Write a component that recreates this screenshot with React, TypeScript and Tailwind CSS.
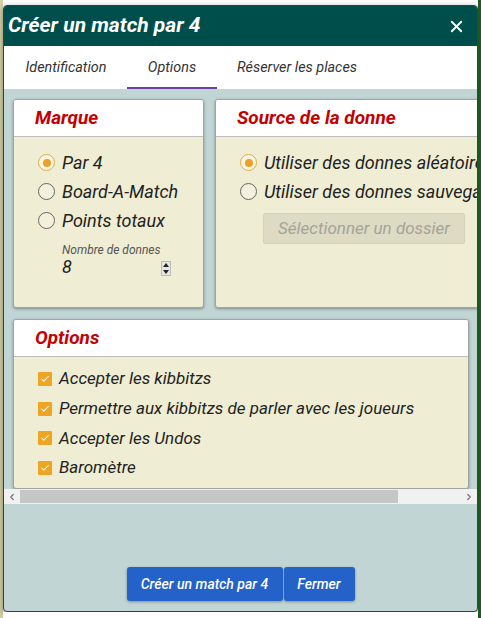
import { X, Check, ChevronLeft, ChevronRight } from "lucide-react";

const font = { fontFamily: "Roboto, 'Noto Sans', sans-serif" };

function Radio({ checked, label }: { checked?: boolean; label: string }) {
  return (
    <div className="flex h-[29px] items-center gap-[7px]">
      <span
        className={
          checked
            ? "flex h-[17px] w-[17px] shrink-0 items-center justify-center rounded-full border border-[#e9a93a] bg-[#fbf6e2]"
            : "flex h-[17px] w-[17px] shrink-0 items-center justify-center rounded-full border border-[#666] bg-[#f3f1dc]"
        }
      >
        {checked && <span className="h-[8px] w-[8px] rounded-full bg-[#eca12a]" />}
      </span>
      <span className="whitespace-nowrap text-[18px] italic leading-[22px] text-[#222]">{label}</span>
    </div>
  );
}

function CheckRow({ label }: { label: string }) {
  return (
    <div className="flex h-[29.7px] items-center gap-[7px]">
      <span className="flex h-[14px] w-[14px] shrink-0 items-center justify-center rounded-[1px] bg-[#eea523]">
        <Check className="h-[10px] w-[10px] text-white" strokeWidth={2.5} />
      </span>
      <span className="whitespace-nowrap text-[17px] italic leading-[21px] text-[#222]">{label}</span>
    </div>
  );
}

function Panel({ title, className, children }: { title: string; className: string; children: React.ReactNode }) {
  return (
    <div className={"flex shrink-0 flex-col overflow-hidden rounded-[3px] border border-[#a3a3a3] bg-[#efedd3] shadow-[0_1px_3px_rgba(0,0,0,0.35)] " + className}>
      <div className="flex h-[37px] shrink-0 items-center border-b border-[#bdbdbd] bg-white pl-[21px]">
        <span className="text-[19px] font-bold italic text-[#c40000]">{title}</span>
      </div>
      {children}
    </div>
  );
}

export default function App() {
  return (
    <div className="flex h-[618px] w-[481px] overflow-hidden bg-white" style={font}>
      <div className="w-[3px] shrink-0 bg-[#d6d1a6]" />
      <div className="flex w-[475px] shrink-0 flex-col">
        <div className="h-[5px] shrink-0 bg-white" />
        {/* Dialog */}
        <div className="flex h-[607px] flex-col overflow-hidden rounded-[4px] border border-[#3d3d3d] bg-[#c2d5d5] shadow-[0_2px_6px_rgba(0,0,0,0.4)]">
          <div className="flex h-[40px] shrink-0 items-center justify-between bg-[#004e4b] pl-[4px] pr-[11px]">
            <span className="text-[21px] font-bold italic text-white">Créer un match par 4</span>
            <X className="h-[19px] w-[19px] text-white" strokeWidth={2.25} />
          </div>
          {/* Tabs */}
          <div className="flex h-[43px] shrink-0 items-stretch bg-white pl-[1px] text-[14.4px] italic text-[#333]">
            <div className="flex w-[122px] items-center justify-center">Identification</div>
            <div className="flex w-[90px] items-center justify-center border-b-[2px] border-[#6c3fa3] pt-[2px]">Options</div>
            <div className="flex w-[160px] items-center justify-center">Réserver les places</div>
          </div>
          {/* Scrollable content */}
          <div className="h-[400px] shrink-0 overflow-hidden">
            <div className="flex w-[560px] flex-col gap-[11px] pl-[9px] pt-[10px]">
              <div className="flex gap-[11px]">
                <Panel title="Marque" className="h-[209px] w-[191px]">
                  <div className="flex flex-col pl-[24px] pt-[11px]">
                    <Radio checked label="Par 4" />
                    <Radio label="Board-A-Match" />
                    <Radio label="Points totaux" />
                    <div className="ml-[24px] mt-[9px] flex w-[105px] items-end justify-between">
                      <div className="flex flex-col">
                        <span className="whitespace-nowrap text-[12px] italic leading-[13px] text-[#555]">Nombre de donnes</span>
                        <span className="text-[18px] italic leading-[20px] text-[#222]">8</span>
                      </div>
                      <div className="mb-[1px] flex h-[15px] w-[10px] shrink-0 flex-col items-center justify-around border border-[#bbb] bg-[#e6e6e6]">
                        <svg width="6" height="4" viewBox="0 0 6 4"><path d="M0 4 L3 0 L6 4 Z" fill="#222" /></svg>
                        <svg width="6" height="4" viewBox="0 0 6 4"><path d="M0 0 L3 4 L6 0 Z" fill="#222" /></svg>
                      </div>
                    </div>
                  </div>
                </Panel>
                <Panel title="Source de la donne" className="h-[209px] w-[320px]">
                  <div className="flex flex-col pl-[24px] pt-[11px]">
                    <Radio checked label="Utiliser des donnes aléatoires" />
                    <Radio label="Utiliser des donnes sauvegardées" />
                    <div className="ml-[23px] mt-[7px] flex h-[31px] w-[202px] items-center justify-center rounded-[2px] border border-[#d5d3bd] bg-[#dddbc4] text-[17px] italic text-[#a4a39a]">
                      Sélectionner un dossier
                    </div>
                  </div>
                </Panel>
              </div>
              <Panel title="Options" className="h-[170px] w-[456px]">
                <div className="flex flex-col pl-[24px] pt-[7px]">
                  <CheckRow label="Accepter les kibbitzs" />
                  <CheckRow label="Permettre aux kibbitzs de parler avec les joueurs" />
                  <CheckRow label="Accepter les Undos" />
                  <CheckRow label="Baromètre" />
                </div>
              </Panel>
            </div>
          </div>
          {/* Fake horizontal scrollbar */}
          <div className="flex h-[15px] shrink-0 items-center bg-[#f1f1f1]">
            <div className="flex w-[16px] justify-center">
              <ChevronLeft className="h-[10px] w-[10px] text-[#777]" strokeWidth={3} />
            </div>
            <div className="flex h-full flex-1 items-center">
              <div className="h-[13px] w-[378px] bg-[#c6c6c6]" />
            </div>
            <div className="flex w-[16px] justify-center">
              <ChevronRight className="h-[10px] w-[10px] text-[#777]" strokeWidth={3} />
            </div>
          </div>
          {/* Footer */}
          <div className="flex flex-1 items-end justify-center gap-[1px] pb-[10px]">
            <button className="h-[34px] w-[156px] rounded-[3px] bg-[#2461c8] text-[14px] font-medium italic text-white shadow-[0_1px_3px_rgba(0,0,0,0.35)]">
              Créer un match par 4
            </button>
            <button className="h-[34px] w-[71px] rounded-[3px] bg-[#2461c8] text-[14px] font-medium italic text-white shadow-[0_1px_3px_rgba(0,0,0,0.35)]">
              Fermer
            </button>
          </div>
        </div>
        <div className="flex-1 bg-white" />
      </div>
      <div className="flex-1 bg-[#1d5a22]" />
    </div>
  );
}
